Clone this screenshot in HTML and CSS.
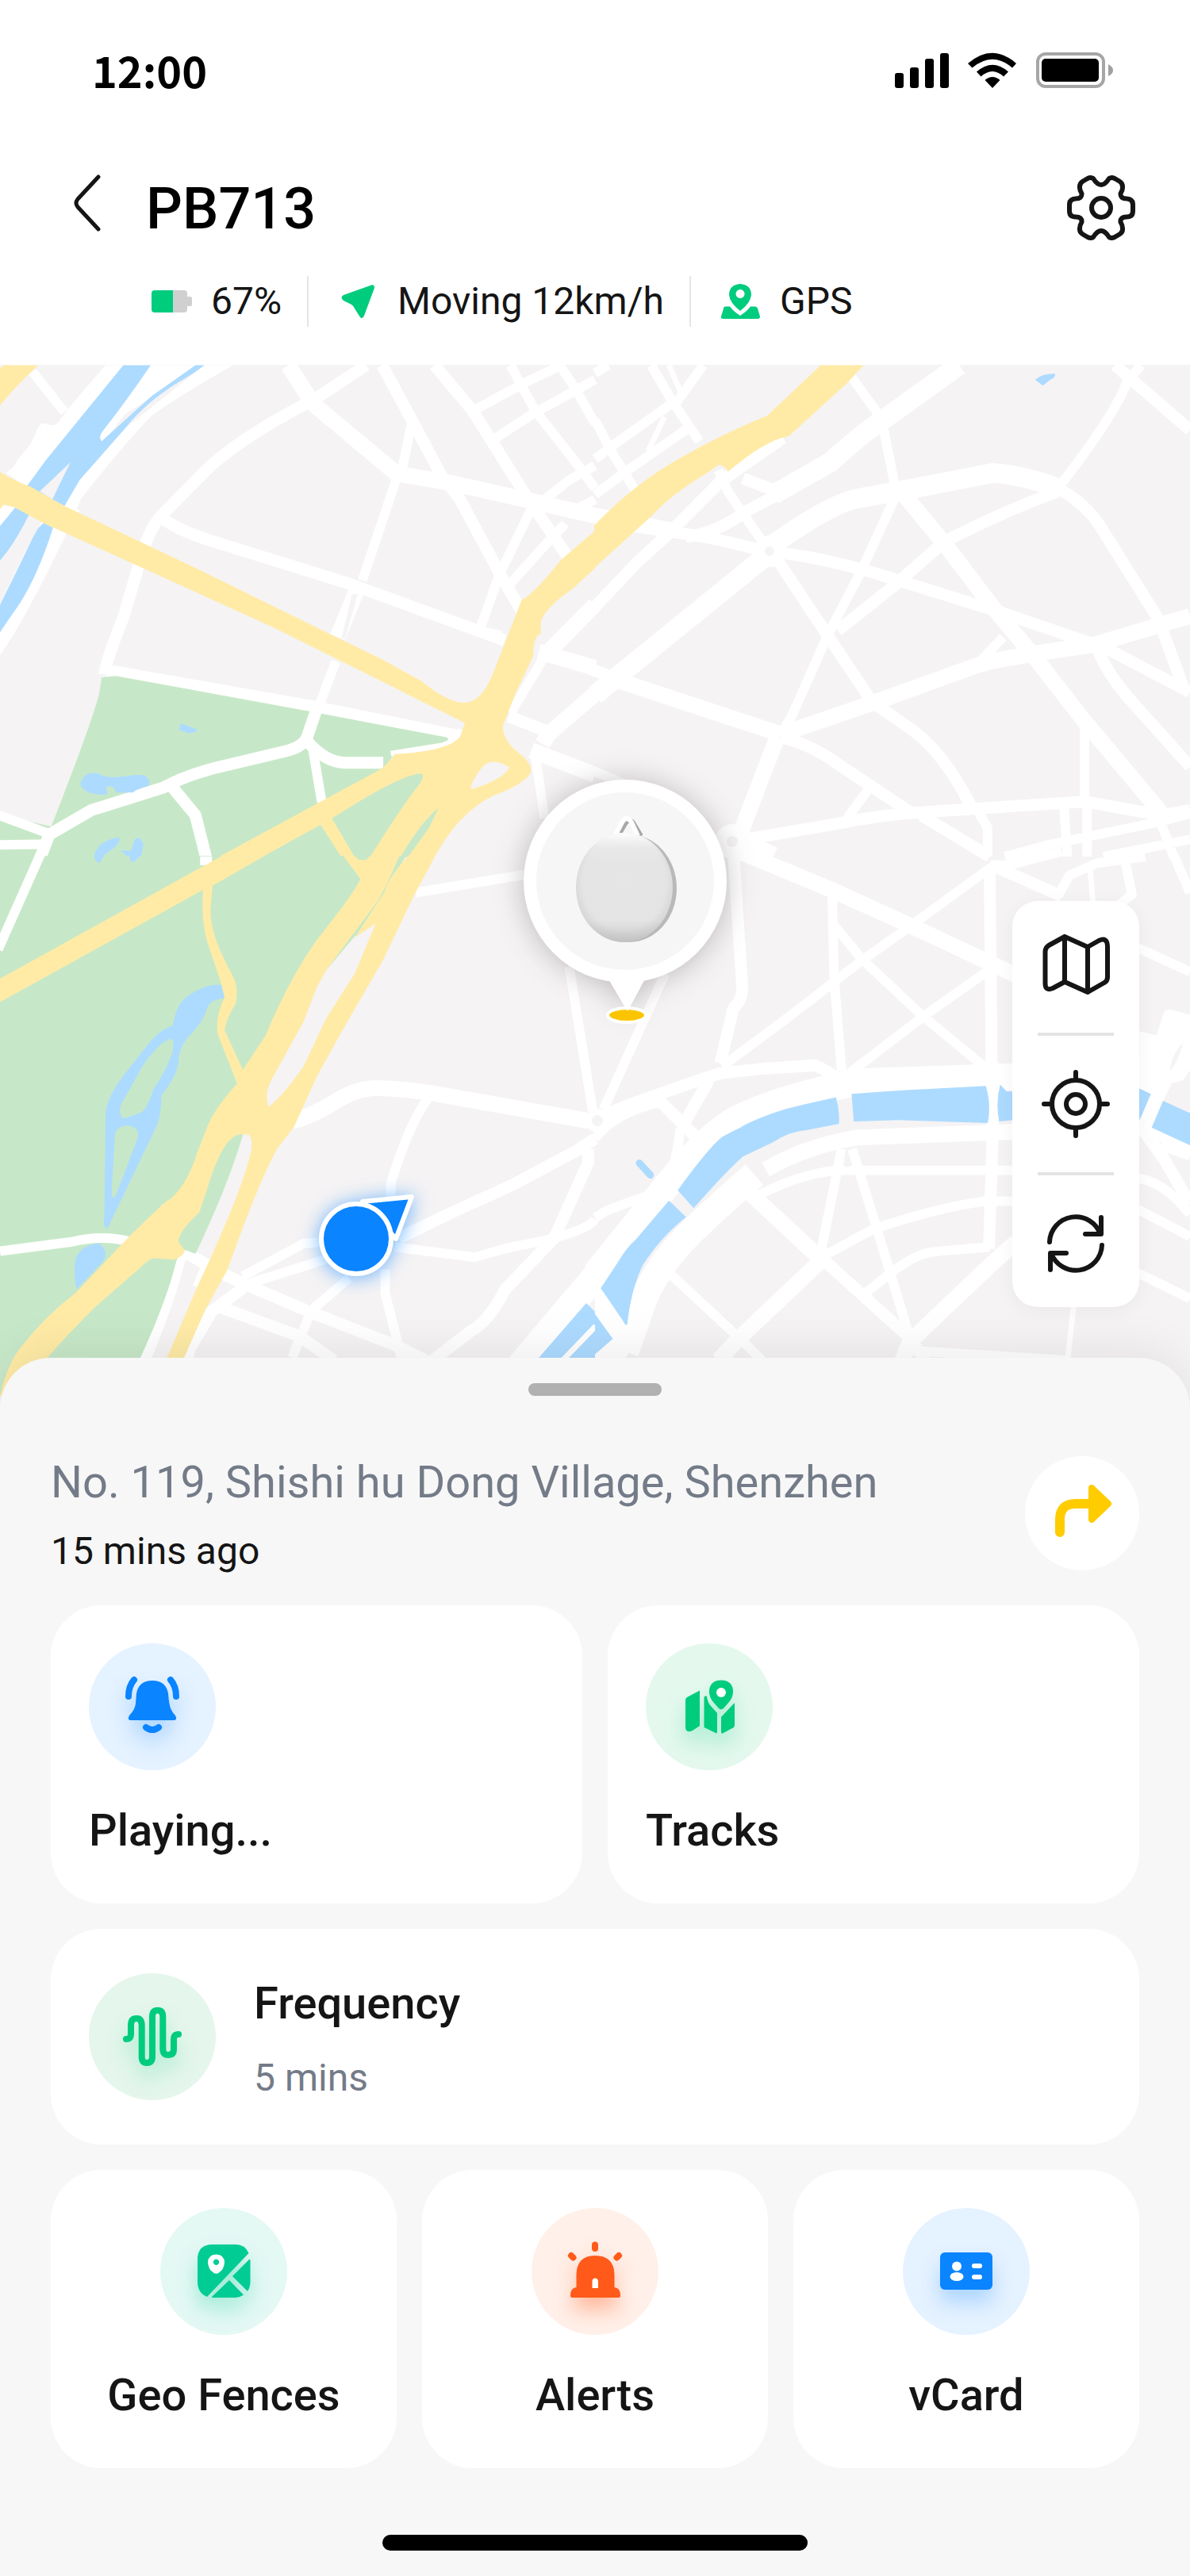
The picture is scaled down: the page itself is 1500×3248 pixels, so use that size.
FILE: index.html
```html
<!DOCTYPE html>
<html lang="en">
<head>
    <meta charset="UTF-8">
    <meta name="viewport" content="width=device-width, initial-scale=1">
    <title>PB713</title>
    <link rel="stylesheet" href="styles.css">
</head>
<body>
<div class="statusbar">
    <span class="time">12:00</span>
    <svg class="status-icons" viewBox="0 0 284 48" aria-hidden="true">
        <rect x="4" y="28" width="11" height="19" rx="3"/>
        <rect x="23" y="21" width="11" height="26" rx="3"/>
        <rect x="42" y="10" width="11" height="37" rx="3"/>
        <rect x="61" y="3" width="11" height="44" rx="3"/>
        <path d="M96 16 Q127 -10.500 157 16 L152 21.500 Q127 0 101.500 21.500Z"/>
        <path d="M107 26.500 Q127 9 147 26.500 L141 32.500 Q127 19.500 112.500 32.500Z"/>
        <path d="M117.500 37 Q127 29 136.500 37 L127 47Z"/>
        <rect class="cell" x="184" y="4" width="83" height="41" rx="10"/>
        <rect x="189" y="10" width="72" height="29" rx="5"/>
        <path class="nub" d="M273 17 Q279 20 279 25 Q279 29 273 32Z"/>
    </svg>
</div>

<header class="header">
    <div class="title-row">
        <button class="icon-btn" aria-label="Back">
            <svg class="line thin" viewBox="0 0 96 96"><path d="M60 9 L34 37 Q30 42 34 47 L60 75"/></svg>
        </button>
        <h1>PB713</h1>
        <button class="icon-btn" aria-label="Settings">
            <svg class="line" viewBox="0 0 96 96">
                <path d="M48 19 Q43 19 38 11 Q35 9 31 11 L25 14.500 Q20.500 17 21 23 Q21 26 23.500 30 Q24 36.500 16 36.500 Q8 37 8 44 V52 Q8 59.500 16 59.500 Q24 59.500 23.500 66 Q21 70 21 74 Q20.500 79 25 81.500 L31 85 Q35 87 38 85 Q43 77 48 77 Q53 77 58 85 Q61 87 65 85 L71 81.500 Q75.500 79 75 74 Q75 70 72.500 66 Q72 59.500 80 59.500 Q88 59.500 88 52 V44 Q88 37 80 36.500 Q72 36.500 72.500 30 Q75 26 75 23 Q75.500 17 71 14.500 L65 11 Q61 9 58 11 Q53 19 48 19Z"/>
                <circle cx="48" cy="48" r="12"/>
            </svg>
        </button>
    </div>
    <ul class="info">
        <li>
            <svg viewBox="0 0 64 64"><rect class="rest" x="20" y="18" width="32" height="28" rx="4"/><rect class="rest" x="50" y="26" width="8" height="12" rx="2"/><path d="M34 18 V46 H11 Q7 46 7 42 V22 Q7 18 11 18Z"/></svg>
            67%
        </li>
        <li>
            <svg viewBox="0 0 64 64"><path d="M49 11.500 L14 24 Q9 27 14 31 L24 36 Q27 38 28 41 L35 52 Q38 55 40 50 L53 15 Q53 10.500 49 11.500Z"/></svg>
            Moving 12km/h
        </li>
        <li>
            <svg viewBox="0 0 64 64"><path fill-rule="evenodd" d="M32 10 Q46 11 46 24 Q45 34 32 44 Q19 34 18 24 Q18 11 32 10Z M32 17 A5.500 5.500 0 1 0 32.100 17Z"/><path d="M13 38.500 H19 Q24 45 32 50 Q40 45 45 38.500 H51 Q53 38.500 54 41 L57 51 Q57 54 54 54 H11 Q7 54 8 51 L11 41 Q11 38.500 13 38.500Z"/></svg>
            GPS
        </li>
    </ul>
</header>

<main>
    <section class="map">
        <svg class="streets" viewBox="0 460 1500 1320" preserveAspectRatio="xMidYMin slice" aria-hidden="true">
            <!-- north west -->
            <g transform="translate(0 440) scale(.4783 .4082)">
                <path class="white" d="M278 50 L190 170 160 215 Q150 240 130 235 Q110 220 100 245 L80 295 45 345 Q40 365 15 382 L75 430 210 500 175 570 Q60 850 0 945 V480 L80 500 330 245 538 50Z M615 50 Q520 110 400 205 Q330 290 215 460 L200 500 100 560 330 200 538 50Z"/>
                <path class="road w12" d="M85 70 L170 195 M1048 390 L955 715 M885 965 L840 1105 M1085 230 L1060 370 M1490 540 L1445 595 1345 725 M1410 1250 L1435 1450 M1430 960 L1345 1125"/>
                <path class="road w12" d="M1245 192 L1390 100 1480 50 M1300 280 L1405 200 1568 95 M1345 50 L1410 190 1530 370 1568 430 M1475 50 L1515 120 1568 230 M1425 475 L1500 405 1568 360 M1510 500 L1568 465 M1410 470 L1315 700 1265 865 M1265 870 L1320 885"/>
                <path class="road w15" d="M965 50 L830 155 Q620 280 530 390 L425 515 Q395 550 370 650 L325 830 Q280 960 275 1005 M430 525 Q470 560 550 590 L920 725 1330 900 M1007 50 L1090 230 1165 395 Q1190 430 1210 460 L1320 700 1375 810 M1145 50 L1245 190 1390 460 1495 640 M280 992 L830 1105 1210 1195 M1340 1135 L1440 1180"/>
                <path class="road w20" d="M760 50 L825 170 1045 385 1195 415 1400 470 1568 515 M945 730 L890 890"/>
                <path class="road w20" d="M1450 930 L1568 790 M1420 935 L1568 985 M1430 1220 L1445 1190 1568 1065 M1400 1240 L1568 1315"/>
                <path class="ground" d="M928 757 L943 757 910 895 900 893Z"/>
                <path class="park" d="M268 1015 L305 1010 820 1120 1178 1200 Q1188 1210 1165 1218 L1040 1250 1010 1300 1120 1310 1160 1410 1080 1568 H0 V1440 L135 1475 Q250 1130 262 1060Z"/>
                <path class="road w12" d="M-10 1437 L130 1498 M0 1532 L110 1530 M825 1240 L848 1400"/>
                <path class="road w15" d="M835 1110 L812 1190 Q805 1225 760 1240 L600 1285 Q500 1310 430 1355 L240 1425 130 1500 105 1575 M812 1215 Q860 1278 910 1278 H1010 M455 1355 L515 1440 545 1580"/>
                <path class="road w7" d="M1215 1175 Q1200 1215 1165 1225 L1030 1250"/>
                <path class="water" d="M325 50 L120 345 70 425 170 485 210 405 330 245 Q380 170 460 110 Q520 70 538 50 H515 L400 145 268 285 Q260 275 268 258 Q340 150 397 50Z M40 490 L0 547 V655 Q40 600 77 512Z M115 537 L140 552 Q100 700 50 790 Q20 840 0 875 V790 Q60 650 95 560Z"/>
                <path class="water" d="M478 1157 L520 1175 Q515 1187 495 1187 L470 1175Z M212 1340 Q225 1300 260 1312 Q280 1328 330 1320 Q370 1312 382 1318 Q400 1335 390 1350 Q360 1360 350 1370 H305 Q302 1345 280 1352 L283 1377 Q215 1378 212 1340Z M248 1575 Q250 1520 315 1508 Q318 1530 290 1550 L260 1575Z M355 1515 Q370 1500 378 1530 L370 1580 H345 L318 1548 345 1550Z"/>
                <path class="ground" d="M186 350 L105 440 138 465 Q160 410 186 350Z M0 655 Q40 600 77 512 L110 535 Q70 610 0 790Z"/>
                <path class="yellow" d="M0 60 L10 50 H100 L70 85 Q30 130 0 175Z M0 380 Q40 410 80 425 L170 485 530 685 860 875 1000 955 1110 1025 Q1180 1093 1225 1093 Q1270 1090 1300 1000 L1340 880 1375 775 Q1405 760 1480 650 L1570 560 V675 L1510 740 Q1425 810 1425 850 V880 Q1405 885 1405 950 L1360 1060 1325 1165 Q1325 1215 1380 1260 Q1405 1290 1398 1310 Q1380 1345 1300 1380 Q1210 1430 1145 1570 H900 L845 1470 690 1570 H575 L1000 1300 Q1025 1280 1040 1252 Q1200 1240 1215 1190 L1225 1155 720 860 110 535 40 490 10 480 0 495Z"/>
                <path class="park" d="M1112 1312 Q1120 1320 1105 1345 Q1060 1410 975 1570 H935 Q900 1500 875 1450 Q1060 1310 1112 1312Z M1156 1418 Q1110 1460 1055 1570 H1075 L1130 1480Z"/>
                <path class="ground" d="M1343 1292 Q1325 1330 1243 1360 Q1235 1350 1265 1300 Q1290 1255 1343 1292Z"/>
            </g>
            <!-- north east -->
            <g transform="translate(750 440) scale(.4783 .4082)">
                <path class="road w7" d="M195 50 L225 130 M183 210 L140 315"/>
                <path class="road w12" d="M0 75 L35 50 M148 50 L200 155 275 285 M285 50 L215 165 M200 170 L45 300 0 340 M245 245 L80 380 0 450 M0 220 L45 320 105 435 M325 375 L350 440 450 610 M1440 50 L1400 100 M675 85 L755 215 790 420 M1405 90 Q1380 190 1220 430 M790 460 L700 690 615 880 520 1130 490 1190 M1075 890 Q1020 960 1000 985 M1290 1150 V1400 M720 1360 L655 1465 M1235 1400 L1245 1568 M1297 1400 V1568 M1490 1460 L1525 1568 M1080 1568 L1200 1530 1490 1460 1568 1435 M1340 1568 L1568 1515 M1010 1430 L1035 1480 V1568 M0 1305 L80 1345"/>
                <path class="road w15" d="M90 545 L230 570 Q300 580 450 625 M0 797 L110 660 190 575 330 410 495 275 M390 400 L480 440 M240 580 Q320 570 400 500 L490 445 M1370 50 L1568 250 M1220 430 Q1290 475 1330 545 L1485 835 1555 1060 M1220 440 Q1100 490 920 595 L800 720 640 870 M450 625 Q600 640 800 715 L1060 810 1310 910 M480 650 L610 880 730 1090 M730 1090 L840 1180 Q920 1250 990 1410 M490 1200 Q570 1220 650 1290 L830 1430 M330 1510 L410 1512 640 1466 Q750 1440 850 1432 L1000 1420 1290 1398 1490 1440 1568 1425 M1325 930 Q1350 1000 1400 1070 L1568 1290 M1340 920 L1568 1060 M860 1440 L1040 1568 M-20 985 L60 1020"/>
                <path class="road w20" d="M800 430 L920 600 1050 800 1150 940 1290 1150 1490 1430 M50 1020 L490 1190 M490 1190 L740 1090 1000 980 Q1060 955 1310 915 L1568 825 M480 1200 L385 1490 M0 515 L200 560"/>
                <path class="road w24" d="M960 50 L770 210 Q720 245 620 350 L470 450 M450 620 Q620 475 700 460 T1050 383 Q1130 390 1220 430 M450 640 L50 1020 0 1070 M380 1520 L470 1568"/>
                <path class="yellow" d="M595 50 H708 L665 105 510 270 Q450 280 350 380 Q345 360 325 358 L300 380 Q200 450 150 515 L-2 677 V545 Q100 420 220 340 Q330 265 455 205Z"/>
                <path class="water" d="M1160 95 Q1180 75 1213 77 Q1212 90 1200 95 L1180 113Z"/>
            </g>
            <!-- south west -->
            <g transform="translate(0 1080) scale(.4783 .4337)">
                <path class="road w12" d="M1095 105 L1380 53 M1500 320 L1562 740 M1130 700 Q1080 770 1030 950 V1000 M640 1220 L800 1125 850 1120 M660 1240 L860 1170 M920 1225 L820 1320 770 1457 M1015 1200 V1270 L1045 1400 1060 1470 M1040 1135 L1250 1165 1330 1140 1440 1115 Q1550 1085 1568 1055"/>
                <path class="road w15" d="M1050 1110 L1200 1030 1350 955 1520 855 1568 820 M1550 850 V890 L1460 1110 1330 1260 Q1290 1350 1240 1380 L1140 1465 M487 1150 L590 1215 660 1250 830 1330 1040 1420 1140 1475 M640 1255 L560 1320 500 1430 490 1480 M580 1310 L790 1395 880 1465 M475 1160 Q450 1280 380 1465"/>
                <path class="road w20" d="M770 770 Q820 755 880 715 Q940 672 1000 673 Q1080 675 1200 700 L1550 768"/>
                <path class="road w34" d="M1600 1180 L1370 1480"/>
                <path class="water" d="M1545 1298 L1570 1325 V1568 H1330 L1420 1457Z"/>
                <path class="road w7" d="M1570 1365 L1480 1468"/>
                <path class="road w7" d="M545 1170 L515 1250"/>
                <path class="park" d="M0 -2 H1070 L970 190 935 235 860 330 710 700 640 810 Q600 960 515 1155 L480 1140 465 1175 Q440 1290 370 1457 L340 1568 H0Z"/>
                <path class="road w12" d="M108 -10 L-5 270 M0 1147 L190 1120 Q270 1098 345 1120"/>
                <path class="road w15" d="M543 0 V25"/>
                <path class="water" d="M582 373 L592 412 Q550 415 545 445 Q535 480 500 520 Q470 555 470 600 Q465 640 425 695 Q425 760 410 790 L285 1078 Q270 1090 275 1040 L278 750 Q280 700 330 630 L380 560 Q420 500 455 492 Q465 430 490 410 Q535 370 582 373Z M262 1124 Q290 1150 270 1180 L202 1258 Q195 1240 197 1180 Q205 1130 262 1124Z M248 -5 H275 L268 10 Q258 30 248 0Z M340 -5 H368 Q362 15 345 17Z"/>
                <path class="park" d="M450 530 Q460 530 455 565 Q440 620 405 675 Q385 740 370 745 L325 762 Q305 740 330 700 L375 610 Q420 540 450 530Z M335 782 Q370 785 362 820 L305 985 Q297 1000 294 980 L303 810 Q305 785 335 782Z"/>
                <path class="ground" d="M860 330 L935 232 990 195 935 340 860 470 800 610 Q750 690 708 728 L700 690 800 400Z"/>
                <path class="yellow" d="M585 -2 L0 355 V423 L535 97 Q530 200 550 260 L585 375 592 410 Q565 470 575 520 L625 660 Q560 740 545 790 L520 860 Q495 950 450 995 Q440 1000 430 1010 L340 1105 200 1268 Q120 1335 60 1420 Q20 1470 0 1568 H5 Q20 1510 125 1457 Q160 1410 250 1310 L370 1195 Q395 1165 410 1168 L460 1172 Q480 1165 487 1145 L470 1120 Q470 1090 525 1035 L545 970 Q590 800 640 808 H655 Q665 815 663 850 Q640 970 520 1250 L440 1457 400 1568 H445 L485 1457 540 1320 600 1200 Q680 950 730 850 L775 785 835 640 900 510 1010 300 1090 115 1147 -2 H1075 Q1015 75 1015 100 L935 235 990 195 935 340 860 470 800 610 Q750 690 708 728 Q695 690 715 650 L800 480 835 380 860 330 995 130 1015 90 1053 -2 H975 L965 10 H945 L935 -2 H905 L950 65 Q940 90 900 150 L830 250 Q760 360 700 520 L640 620 592 505 Q597 470 620 430 Q632 380 610 340 Q550 220 555 150 L560 85 697 -2Z"/>
            </g>
            <!-- south east -->
            <g transform="translate(750 1080) scale(.4783 .4337)">
                <path class="road w7" d="M1262 1300 L1245 1470 M1305 40 L1312 130"/>
                <path class="road w12" d="M625 110 L630 350 650 625 M1045 30 L840 195 700 305 500 475 335 610 M630 200 L705 300 865 465 1025 610 M1045 325 L865 465 670 630 M185 340 L22 735 M225 790 Q215 900 180 970 Q100 1000 30 1030 L0 1050 M0 820 Q50 745 170 715 M430 985 Q560 912 660 912 H1110 M650 850 L595 1150 M678 850 L745 1090 830 1400 M605 1160 L730 1085 Q900 1020 1030 1002 H1110 M700 1280 L780 1210 Q850 1150 900 1148 L1040 1135 M190 1205 L390 1410 440 1465 M840 1437 L1240 1464 M1430 265 L1568 335 M1430 935 Q1500 945 1568 1040 M1430 1025 L1568 1105 M1430 1210 L1568 1285 M1490 840 L1568 870 M1525 -5 L1568 105 M1395 0 L1415 110 1370 150 M1220 115 L1250 55 1320 20 1450 0 M1040 25 H1090 L1230 -15"/>
                <path class="road w15" d="M1040 40 L1045 600 M1048 600 V800 L1038 1140 M365 -10 L388 380 Q388 420 365 440 L330 600 M1045 25 L1230 115 M0 765 Q40 740 170 690 Q300 640 330 630 L440 617 580 607 Q600 615 640 645 M300 650 L235 775 M170 710 L270 820 M590 1160 L830 1400 870 1465 M1440 790 L1500 880 1568 1010"/>
                <path class="road w20" d="M380 -15 L620 95 830 200 1110 345 M410 980 L590 1165 M600 1170 L380 1400 325 1465 M1110 1120 L1030 1200 830 1410 810 1465 M1110 800 L690 817 Q560 840 450 910"/>
                <path class="road w34" d="M1110 640 L700 655 Q500 695 370 765 Q290 820 205 935 L0 1215 M420 925 Q330 1010 260 1085 Q150 1200 115 1330 L80 1440 M650 640 L655 660"/>
                <path class="white" d="M1500 450 Q1510 440 1535 450 L1568 460 V620 L1550 650 1520 660 1497 710 1467 788 1568 838 1568 860 1430 810 1435 555 V508 L1480 520Z M0 1180 L77 1355 110 1400 80 1460 H0Z"/>
                <path class="water" d="M218 970 Q300 845 335 815 Q360 800 380 790 L400 777 Q470 740 545 722 L635 700 Q645 740 643 777 L560 795 Q510 800 470 830 L390 872 Q350 910 260 1022Z M676 690 L800 680 1030 667 Q1045 720 1035 775 L800 766 682 770Z M1068 663 L1085 683 H1110 V765 L1065 770 Q1055 715 1068 663Z M1430 672 L1465 690 1435 768Z M1497 710 L1570 747 V840 L1467 788Z M195 1000 L240 1048 Q170 1110 125 1190 Q95 1260 85 1360 Q80 1365 77 1355 L15 1255 60 1180 Q80 1140 110 1110Z M0 1330 L47 1402 0 1447Z"/>
                <path class="canal" d="M117 891 L146 926"/>
                <path class="ground" d="M1550 543 Q1520 570 1515 625 Q1535 600 1550 543Z M660 852 L675 895 Q665 910 656 898Z"/>
            </g>
            <!-- roundabouts -->
            <circle class="white" cx="970" cy="695" r="20"/>
            <circle class="ground" cx="970" cy="695" r="6"/>
            <circle class="white" cx="923" cy="1061" r="22"/>
            <circle class="ground" cx="923" cy="1061" r="7"/>
            <circle class="white" cx="753" cy="1413" r="15"/>
            <circle class="ground" cx="753" cy="1413" r="7"/>
            <!-- phone position -->
            <g class="me">
                <path d="M457 1515 L519 1509 499 1562Z"/>
                <circle cx="449" cy="1562" r="44"/>
            </g>
            <!-- tag position -->
            <defs>
                <radialGradient id="face" cx=".5" cy=".45" r=".58">
                    <stop offset="0" stop-color="#e6e6e6"/>
                    <stop offset=".75" stop-color="#e4e4e4"/>
                    <stop offset="1" stop-color="#cfcfcf"/>
                </radialGradient>
                <linearGradient id="shine" x1="0" y1="0" x2="0" y2="1">
                    <stop offset="0" stop-color="#fff" stop-opacity=".9"/>
                    <stop offset=".14" stop-color="#fff" stop-opacity=".15"/>
                    <stop offset=".3" stop-color="#fff" stop-opacity="0"/>
                    <stop offset=".8" stop-color="#bbb" stop-opacity="0"/>
                    <stop offset="1" stop-color="#b4b4b4" stop-opacity=".6"/>
                </linearGradient>
            </defs>
            <g class="bubble">
                <path d="M768 1236 H812 L791 1275Z"/>
                <circle cx="788" cy="1111" r="128"/>
            </g>
            <ellipse class="spot" cx="790" cy="1280" rx="24" ry="9"/>
            <path class="white" d="M768 1236 H812 L791 1275Z"/>
            <circle class="plate" cx="788" cy="1111" r="112"/>
            <path class="loop-back" d="M779 1054 L789 1037 Q795 1032 799 1039 L808 1054"/>
            <path class="loop" d="M775 1054 L784 1037 Q790 1027 796 1037 L804 1054"/>
            <ellipse class="rim" cx="793" cy="1120" rx="60" ry="68"/>
            <ellipse cx="787" cy="1119" rx="61" ry="69" fill="url(#face)"/>
            <ellipse cx="787" cy="1119" rx="61" ry="69" fill="url(#shine)"/>
        </svg>
        <div class="tools">
            <button aria-label="Map type">
                <svg class="line" viewBox="0 0 96 96"><path d="M34 13 L14 24 Q9.500 27 9.500 32 V72 Q9.500 82 19 78 L34 70 63 83 84 71 Q88 69 88 64 V26 Q88 13 77 18 L63 26Z M34 13 V70 M63 26 V83"/></svg>
            </button>
            <hr>
            <button aria-label="Locate">
                <svg class="line" viewBox="0 0 96 96"><circle cx="48" cy="48" r="30"/><circle cx="48" cy="48" r="12"/><path d="M8 48 H18 M78 48 H88 M48 8 V18 M48 78 V88"/></svg>
            </button>
            <hr>
            <button aria-label="Refresh">
                <svg class="line" viewBox="0 0 96 96"><path d="M15 46 A33 33 0 0 1 79 36 M80 15 V36 H60 M81 50 A33 33 0 0 1 17 60 M16 81 V60 H36"/></svg>
            </button>
        </div>
    </section>

    <section class="sheet">
        <div class="handle"></div>
        <div class="place">
            <div>
                <p class="address">No. 119, Shishi hu Dong Village, Shenzhen</p>
                <p class="ago">15 mins ago</p>
            </div>
            <button class="route" aria-label="Directions">
                <svg viewBox="0 0 144 144"><path class="arm" d="M44 96 V80 Q44 60 64 60 H84"/><path class="head" d="M84 40 L105 60 84 80Z"/></svg>
            </button>
        </div>

        <div class="cards">
            <button class="card half">
                <svg class="badge blue" viewBox="0 0 160 160">
                    <circle class="disc" cx="80" cy="80" r="80"/>
                    <g class="glyph">
                        <path d="M80 47 Q97 47 100 63 Q101 79 104 84 Q106 88 109 91 Q112 97 107 97 H53 Q48 97 51 91 Q58 84 59 76 L60 63 Q63 47 80 47Z"/>
                        <path class="stroke" d="M57 46 Q50 54 50 67 M103 46 Q110 54 110 67 M72 106 Q80 112 88 106"/>
                    </g>
                </svg>
                <span>Playing...</span>
            </button>
            <button class="card half">
                <svg class="badge green" viewBox="0 0 160 160">
                    <circle class="disc" cx="80" cy="80" r="80"/>
                    <g class="glyph">
                        <path d="M52 68 L68 59.500 V104 L59 110 Q50 114 50 105 V72 Q50 69 52 68Z M73.500 68 Q75 65 77 67 Q78 75 82 79 L90 88 V112 Q90 114 88 113 L73.500 106Z M95 93 L111 76 Q112 74 112 77 V103 Q112 106 109 107 L97 113.500 Q95 114 95 112Z"/>
                        <path d="M95 46.500 Q110 47 110 61 Q110 68 105 74 L98 82 Q95 84.500 92 82 L85 74 Q80 68 80 61 Q80 47 95 46.500Z"/>
                    </g>
                    <circle class="white" cx="95" cy="62" r="6"/>
                </svg>
                <span>Tracks</span>
            </button>
            <button class="card wide">
                <svg class="badge mint" viewBox="0 0 160 160">
                    <circle class="disc" cx="80" cy="80" r="80"/>
                    <g class="glyph"><path class="stroke" d="M47 83 Q53 83 53 76 V66 Q53 57 60 57 Q66.700 57 66.700 66 V105 Q66.700 113 73 113 Q80 113 80 105 V55 Q80 46.700 86.700 46.700 Q93.300 46.700 93.300 55 V95 Q93.300 103 100 103 Q107 103 107 96 V84 Q107 77 113 77"/></g>
                </svg>
                <span class="text">
                    <span>Frequency</span>
                    <small>5 mins</small>
                </span>
            </button>
            <button class="card third">
                <svg class="badge teal" viewBox="0 0 160 160">
                    <circle class="disc" cx="80" cy="80" r="80"/>
                    <g class="glyph"><path d="M66 46 H95 Q107 46 111.500 57 L59 112 Q47 107 47 93 V65 Q47 46 66 46Z M112 65 Q113.500 64 113.500 67 V94 Q113 101 110 105 L91 86Z M87 91 L105 109.500 Q100 113 95 113 H66 Q64 113 66 111Z"/></g>
                    <path class="white" fill-rule="evenodd" d="M70.500 58.500 Q81 59 81 69 Q80 78 74 81.500 Q70.500 84 67 81.500 Q61 78 60 69 Q60 59 70.500 58.500Z M70.500 64.500 A3.700 3.700 0 1 0 70.600 64.500Z"/>
                </svg>
                <span>Geo Fences</span>
            </button>
            <button class="card third">
                <svg class="badge orange" viewBox="0 0 160 160">
                    <circle class="disc" cx="80" cy="80" r="80"/>
                    <g class="glyph">
                        <path d="M56.500 100 V84 Q57 60 80 60 Q104 60 104.500 84 V100 Q112 101 112 110 Q112 113 110 113 H51 Q49 113 49 110 Q49 101 56.500 100Z"/>
                        <path class="stroke" d="M80 46.500 V51 M50 60 L52.500 62.500 M110 60 L107.500 62.500"/>
                    </g>
                    <path class="white" d="M76.500 101 V92 Q77 88.500 80 88.500 Q83.500 88.500 84 92 V101Z"/>
                </svg>
                <span>Alerts</span>
            </button>
            <button class="card third">
                <svg class="badge blue" viewBox="0 0 160 160">
                    <circle class="disc" cx="80" cy="80" r="80"/>
                    <g class="glyph"><rect x="47" y="56" width="66" height="47" rx="6"/></g>
                    <g class="white">
                        <circle cx="68" cy="73.500" r="6"/>
                        <ellipse cx="68" cy="86.500" rx="8.500" ry="5.500"/>
                        <rect x="87" y="70" width="13" height="6" rx="3"/>
                        <rect x="87" y="84" width="13" height="6" rx="3"/>
                    </g>
                </svg>
                <span>vCard</span>
            </button>
        </div>
        <div class="home"></div>
    </section>
</main>
</body>
</html>
```

FILE: styles.css
```css
* {
    box-sizing: border-box;
}
body {
    margin: 0;
    background: #fff;
    color: #151515;
    font-family: Roboto, "Liberation Sans", sans-serif;
    font-size: 48px;
}
button {
    padding: 0;
    border: none;
    background: none;
    color: inherit;
    font: inherit;
    cursor: pointer;
}
svg {
    display: block;
}
p, h1, ul {
    margin: 0;
    padding: 0;
}

/* status bar */
.statusbar {
    display: flex;
    justify-content: space-between;
    align-items: center;
    height: 176px;
    padding: 0 92px 0 116px;
    color: #000;
}
.time {
    font-family: "Noto Sans CJK SC", sans-serif;
    font-size: 54px;
    font-weight: 700;
    line-height: 64px;
}
.status-icons {
    width: 284px;
    height: 48px;
}
.cell {
    fill: none;
    stroke: #a6a6a6;
    stroke-width: 4;
}
.nub {
    fill: #a0a0a0;
}

/* header */
.header {
    padding: 38px 64px 48px;
}
.title-row {
    display: flex;
    align-items: center;
    gap: 24px;
    margin-bottom: 38px;
}
.title-row h1 {
    flex: 1;
    padding-top: 4px;
    color: #000;
    font-size: 72px;
    font-weight: 500;
    line-height: 92px;
}
.icon-btn svg, .tools svg {
    width: 96px;
    height: 96px;
}
.line {
    fill: none;
    stroke: #151515;
    stroke-width: 6;
    stroke-linecap: round;
    stroke-linejoin: round;
}
.thin {
    stroke-width: 5;
}
.info {
    display: flex;
    margin-left: 120px;
    list-style: none;
    line-height: 64px;
}
.info li {
    display: flex;
    gap: 18px;
}
.info li + li {
    margin-left: 32px;
    padding-left: 30px;
    border-left: 2px solid #e5e5e5;
}
.info svg {
    width: 64px;
    height: 64px;
    fill: #00cc7e;
}
.info .rest {
    fill: #d0d0d0;
}

/* map */
.map {
    position: relative;
    background: #f5f3f4;
}
.streets {
    width: 100%;
}
.streets path {
    vector-effect: non-scaling-stroke;
}
.ground {
    fill: #f5f3f4;
}
.park {
    fill: #c7e8c8;
}
.water {
    fill: #addbff;
}
.yellow {
    fill: #ffeba6;
}
.white {
    fill: #fff;
}
.road {
    fill: none;
    stroke: #fff;
    stroke-linejoin: round;
}
.canal {
    fill: none;
    stroke: #addbff;
    stroke-width: 9;
    stroke-linecap: round;
}
.w7 {
    stroke-width: 7;
}
.w12 {
    stroke-width: 12;
}
.w15 {
    stroke-width: 15;
}
.w20 {
    stroke-width: 20;
}
.w24 {
    stroke-width: 25;
}
.w34 {
    stroke-width: 34;
}
.me {
    fill: #0a84ff;
    stroke: #fff;
    stroke-width: 6;
    stroke-linejoin: round;
    filter: drop-shadow(0 2px 12px rgba(10, 132, 255, 0.6));
}
.bubble {
    fill: #fff;
    filter: drop-shadow(0 2px 18px rgba(60, 50, 50, 0.3));
}
.plate {
    fill: #f6f6f6;
}
.spot {
    fill: #fac500;
    stroke: #fff;
    stroke-width: 4;
}
.rim {
    fill: #b9b9b9;
}
.loop, .loop-back {
    fill: none;
    stroke: #fff;
    stroke-width: 6;
}
.loop-back {
    stroke: #a8a8a8;
}
.tools {
    position: absolute;
    right: 64px;
    bottom: 132px;
    display: flex;
    flex-direction: column;
    gap: 38px;
    padding: 32px;
    border-radius: 32px;
    background: #fff;
    box-shadow: 0 4px 24px rgba(0, 0, 0, 0.05);
}
.tools hr {
    width: 100%;
    height: 4px;
    margin: 0;
    border: none;
    background: #e4e4e4;
}

/* bottom sheet */
.sheet {
    position: relative;
    margin-top: -68px;
    padding: 32px 64px;
    border-radius: 64px 64px 0 0;
    background: #f7f7f7;
    box-shadow: 0 -8px 60px rgba(0, 0, 0, 0.08);
}
.handle {
    width: 168px;
    height: 16px;
    margin: 0 auto 76px;
    border-radius: 8px;
    background: #b1b1b1;
}
.place {
    display: flex;
    justify-content: space-between;
    margin-bottom: 36px;
}
.address {
    color: #747b88;
    font-size: 56px;
    line-height: 66px;
}
.ago {
    margin-top: 22px;
    line-height: 64px;
}
.route {
    width: 144px;
    height: 144px;
    border-radius: 50%;
    background: #fff;
}
.arm {
    fill: none;
    stroke: #ffcc00;
    stroke-width: 12;
    stroke-linecap: round;
}
.head {
    fill: #ffcc00;
    stroke: #ffcc00;
    stroke-width: 8;
    stroke-linejoin: round;
}
.cards {
    display: grid;
    grid-template-columns: repeat(6, 1fr);
    gap: 32px;
}
.card {
    display: flex;
    flex-direction: column;
    gap: 40px;
    padding: 48px 48px 56px;
    border-radius: 64px;
    background: #fff;
    font-size: 56px;
    font-weight: 500;
    line-height: 72px;
    white-space: nowrap;
}
.half {
    grid-column: span 3;
    align-items: flex-start;
}
.wide {
    grid-column: span 6;
    flex-direction: row;
    align-items: center;
    gap: 48px;
    padding: 52px 48px;
    text-align: left;
}
.third {
    grid-column: span 2;
    align-items: center;
}
.text {
    display: flex;
    flex-direction: column;
    gap: 26px;
    padding-top: 6px;
}
.text small {
    color: #747b88;
    font-size: 48px;
    font-weight: 400;
    line-height: 64px;
}
.badge {
    width: 160px;
    height: 160px;
    overflow: visible;
}
.stroke {
    fill: none;
    stroke: currentColor;
    stroke-width: 8;
    stroke-linecap: round;
}
.glyph {
    fill: currentColor;
    filter: drop-shadow(0 16px 12px var(--glow));
}
.blue {
    --glow: rgba(10, 132, 255, 0.25);
    color: #0a84ff;
}
.blue .disc {
    fill: #e5f2ff;
}
.green, .mint {
    --glow: rgba(0, 204, 126, 0.25);
    color: #00cc7e;
}
.green .disc {
    fill: #e4f8ee;
}
.mint .disc {
    fill: #e5f6ec;
}
.teal {
    --glow: rgba(0, 204, 146, 0.3);
    color: #00cc94;
}
.teal .disc {
    fill: #e4f8f4;
}
.orange {
    --glow: rgba(255, 90, 26, 0.35);
    color: #ff5a1a;
}
.orange .disc {
    fill: #fff0e9;
}
.home {
    width: 536px;
    height: 20px;
    margin: 84px auto 0;
    border-radius: 10px;
    background: #000;
}
```
